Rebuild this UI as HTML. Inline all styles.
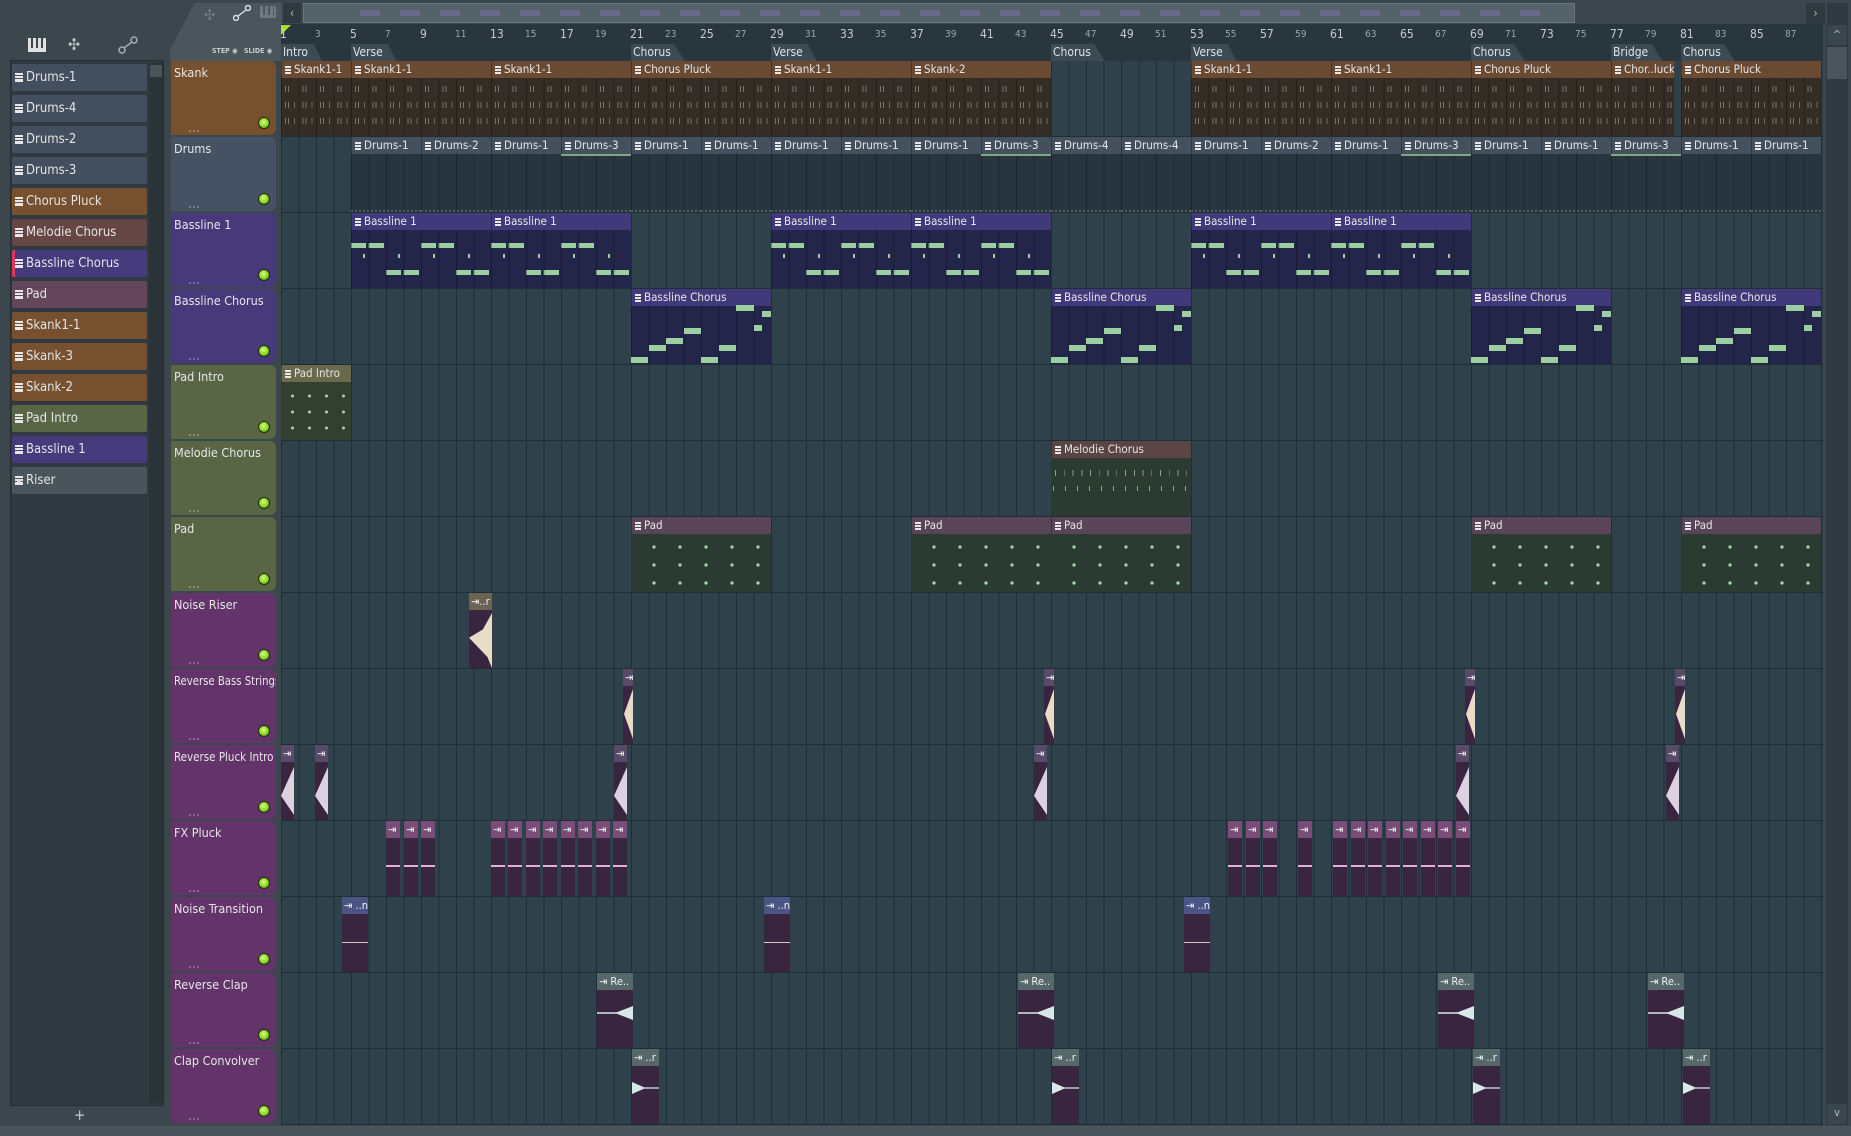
<!DOCTYPE html>
<html><head><meta charset="utf-8"><style>
*{margin:0;padding:0;box-sizing:border-box}
body{width:1851px;height:1136px;background:#3c464d;position:relative;overflow:hidden;font-family:"Liberation Sans Narrow","DejaVu Sans Condensed","Liberation Sans",sans-serif;color:#d8dde0}
.abs{position:absolute}
#lp{left:10px;top:60px;width:154px;height:1046px;background:#2f393f;border:1px solid #252d33}
#lps{left:149px;top:63px;width:14px;height:1040px;background:#2a3338}
#lps i{position:absolute;left:1px;top:2px;width:12px;height:12px;background:#4a545b}
.li{position:absolute;left:12px;width:135px;height:27px;font-size:13px;line-height:27px;padding-left:14px;color:#e4e4e4;border-radius:2px;white-space:nowrap}
.li:before{content:"";position:absolute;left:3px;top:9px;width:8px;height:9px;background:linear-gradient(#e8e8e8 0 2px,transparent 2px 3px,#e8e8e8 3px 5px,transparent 5px 6px,#e8e8e8 6px 9px)}
.dr{background:#434e5e}.br{background:#76502f}.rd{background:#654645}.pu{background:#453a7c}.mv{background:#64465a}.ol{background:#5a6546}.gy{background:#4a545b}
#tp{left:170px;top:3px;width:112px;height:58px;background:#4a555c;clip-path:polygon(22% 0,100% 0,100% 100%,0 100%,0 80%);border-radius:8px 0 0 0}
.hd{position:absolute;left:171px;width:105px;height:74px;border-radius:0 6px 6px 0;font-size:12.5px;padding:4px 0 0 3px;color:#e6e6e6;white-space:nowrap;overflow:hidden}
.hd span{display:inline-block;transform-origin:0 0}
.hd b{position:absolute;right:6px;bottom:6px;width:12px;height:12px;border-radius:50%;background:radial-gradient(circle at 45% 40%,#d8ff7a,#7fce1e 60%,#3c6a10);border:1px solid #1d2a10}
.hd u{position:absolute;left:18px;bottom:3px;width:10px;height:2px;border-top:2px dotted rgba(255,255,255,.25)}
#grid{left:281px;top:61px;width:1542px;height:1064px;background:#2f424b;background-image:repeating-linear-gradient(90deg,#1f2d35 0 1px,transparent 1px 17.5px),repeating-linear-gradient(180deg,transparent 0 75px,#1f2d35 75px 76px)}
.n{position:absolute;top:29px;left:calc(280px + (var(--s) - 1)*17.5px);font-size:10px;color:#9aa6ad}
.n.b{font-size:12px;color:#c5ccd1;top:27px}
#ruler{left:281px;top:24px;width:1542px;height:37px;background:#2a363d}
.mk{position:absolute;top:44px;left:calc(281px + (var(--s) - 1)*17.5px);height:17px;padding:0 14px 0 2px;font-size:12px;line-height:17px;color:#e0e4e6;background:#3b4a53;clip-path:polygon(0 0,80% 0,100% 100%,0 100%)}
.c{position:absolute;left:calc(281px + (var(--s) - 1)*17.5px);width:calc((var(--e) - var(--s))*17.5px);height:75px;overflow:hidden}
.t{height:17px;font-size:11.5px;line-height:17px;padding-left:12px;white-space:nowrap;overflow:hidden;position:relative;color:#e6e6e6;border-left:1px solid rgba(0,0,0,.3)}
.t:before{content:"";position:absolute;left:3px;top:5px;width:6px;height:8px;background:linear-gradient(#e8e8e8 0 2px,transparent 2px 3px,#e8e8e8 3px 5px,transparent 5px 6px,#e8e8e8 6px 8px)}
.bd{height:58px;position:relative;background-image:repeating-linear-gradient(90deg,rgba(0,0,0,.3) 0 1px,transparent 1px 17.5px)}
.sk .t{background:#6b4a33}.sk .bd{background-color:#362c26;background-image:repeating-linear-gradient(90deg,rgba(0,0,0,.3) 0 1px,transparent 1px 17.5px),repeating-linear-gradient(90deg,transparent 0 4px,rgba(160,190,150,.55) 4px 5px,transparent 5px 7px,rgba(160,190,150,.55) 7px 8px,transparent 8px 17.5px);background-size:auto,100% 6px;background-repeat:repeat,repeat-x;background-position:0 0,0 8px}
.sk .bd:before,.sk .bd:after{content:"";position:absolute;left:0;right:0;height:6px;background:repeating-linear-gradient(90deg,transparent 0 4px,rgba(160,190,150,.55) 4px 5px,transparent 5px 7px,rgba(160,190,150,.55) 7px 8px,transparent 8px 13px,rgba(160,190,150,.45) 13px 14px,transparent 14px 17.5px)}
.sk .bd:before{top:24px}.sk .bd:after{top:40px}
.dm .t{background:#45505f}.dm .bd{background-color:#28353f;border-bottom:2px dotted rgba(160,200,160,.3)}
.dm.g .bd{border-top:2px solid #7fa880}
.bl .t{background:#42397a}.bl .bd{background-color:#23254a;background-image:repeating-linear-gradient(90deg,rgba(0,0,0,.3) 0 1px,transparent 1px 17.5px),linear-gradient(90deg,#9ccfa0 0 15px,transparent 15px 17.5px,#9ccfa0 17.5px 33px,transparent 33px),linear-gradient(90deg,transparent 0 35px,#9ccfa0 35px 50px,transparent 50px 52.5px,#9ccfa0 52.5px 68px,transparent 68px),linear-gradient(90deg,transparent 0 12px,#9ccfa0 12px 14px,transparent 14px);background-size:auto,70px 5px,70px 5px,35px 4px;background-repeat:repeat,repeat-x,repeat-x,repeat-x;background-position:0 0,0 13px,0 40px,0 24px}
.bc .t{background:#42397a}.bc .bd{background-color:#23254a}
.bc i{position:absolute;background:#9ccfa0;height:6px}
.pi .t{background:#6a694c}.pi .bd{background-color:#33402f;background-image:radial-gradient(circle,#a8d0a0 1.3px,transparent 1.8px);background-size:17px 16px;background-position:3px 6px}
.mc .t{background:#5a4444}.mc .bd{background-color:#2c3b31;background-image:repeating-linear-gradient(90deg,transparent 0 4px,#88a888 4px 5px,transparent 5px 8.75px),repeating-linear-gradient(90deg,transparent 0 2px,#88a888 2px 3px,transparent 3px 12px);background-size:100% 6px,100% 5px;background-repeat:repeat-x,repeat-x;background-position:0 12px,0 28px}
.pd .t{background:#5a4458}.pd .bd{background-color:#2c3b31;background-image:radial-gradient(circle,#a8d8a8 1.4px,transparent 1.9px);background-size:26px 18px;background-position:10px 4px}
.a{position:absolute;height:75px;overflow:hidden;background:#3a2540}
.a .h{height:17px;font-size:11px;line-height:17px;color:#f0f0f0;padding-left:2px;white-space:nowrap;overflow:hidden}
.a .w{position:absolute;left:0;right:0;background:#e8dcc8}
.fx .h{background:#7a4c78}.rp .h{background:#5a4a6a}.rb .h{background:#5a4a6a}.nr .h{background:#6b6455}.nt .h{background:#4a5585}.rc .h,.cc .h{background:#56686a}
#vs{left:1826px;top:24px;width:22px;height:1101px;background:#2f3a40}
</style></head><body>
<div class="abs" style="left:28px;top:38px;width:18px;height:14px;background:linear-gradient(90deg,#e0e0e0 0 3px,transparent 3px 5px,#e0e0e0 5px 8px,transparent 8px 10px,#e0e0e0 10px 13px,transparent 13px 15px,#e0e0e0 15px 18px);border-bottom:4px solid #e0e0e0"></div>
<div class="abs" style="left:68px;top:38px;width:22px;height:14px;color:#bcc3c8;font-size:16px;line-height:14px">✣</div>
<svg class="abs" style="left:118px;top:36px" width="20" height="18"><circle cx="4" cy="14" r="3" fill="none" stroke="#aab" stroke-width="1.5"/><circle cx="16" cy="4" r="3" fill="none" stroke="#aab" stroke-width="1.5"/><line x1="6" y1="12" x2="14" y2="6" stroke="#aab" stroke-width="1.5"/></svg>
<div id="lp" class="abs"></div>
<div id="lps" class="abs"><i></i></div>
<div class="li dr" style="top:64px">Drums-1</div>
<div class="li dr" style="top:95px">Drums-4</div>
<div class="li dr" style="top:126px">Drums-2</div>
<div class="li dr" style="top:157px">Drums-3</div>
<div class="li br" style="top:188px">Chorus Pluck</div>
<div class="li rd" style="top:219px">Melodie Chorus</div>
<div class="li pu" style="top:250px;box-shadow:inset 3px 0 0 #e0365a">Bassline Chorus</div>
<div class="li mv" style="top:281px">Pad</div>
<div class="li br" style="top:312px">Skank1-1</div>
<div class="li br" style="top:343px">Skank-3</div>
<div class="li br" style="top:374px">Skank-2</div>
<div class="li ol" style="top:405px">Pad Intro</div>
<div class="li pu" style="top:436px">Bassline 1</div>
<div class="li gy" style="top:467px;padding-left:14px">Riser</div>
<div class="abs" style="left:17px;top:479px;width:4px;height:4px;border-radius:50%;background:#ddd"></div>
<div class="abs" style="left:74px;top:1106px;font-size:15px;color:#ccd">+</div>
<div id="tp" class="abs"></div>
<div class="abs" style="left:204px;top:6px;font-size:15px;color:#6e7a82">✣</div>
<svg class="abs" style="left:233px;top:5px" width="18" height="16"><circle cx="3" cy="13" r="2.5" fill="none" stroke="#dde" stroke-width="1.4"/><circle cx="15" cy="3" r="2.5" fill="none" stroke="#dde" stroke-width="1.4"/><line x1="5" y1="11" x2="13" y2="5" stroke="#dde" stroke-width="1.4"/></svg>
<div class="abs" style="left:260px;top:6px;width:16px;height:12px;background:linear-gradient(90deg,#6e7a82 0 3px,transparent 3px 5px,#6e7a82 5px 8px,transparent 8px 10px,#6e7a82 10px 13px,transparent 13px 14px,#6e7a82 14px 16px);border-bottom:3px solid #6e7a82"></div>
<div class="abs" style="left:212px;top:47px;font-size:7px;color:#c8ced2;font-weight:bold">STEP ◉ &nbsp; SLIDE ◉</div>
<div class="abs" style="left:283px;top:3px;width:18px;height:20px;background:#2f3a40;color:#bbb;font-size:12px;text-align:center;line-height:20px">‹</div>
<div class="abs" style="left:303px;top:3px;width:1272px;height:20px;background:#56626a;border:1px solid #6a767e"></div>
<div class="abs" style="left:340px;top:10px;width:1200px;height:6px;background:repeating-linear-gradient(90deg,transparent 0 20px,rgba(140,120,200,.35) 20px 40px)"></div>
<div class="abs" style="left:1806px;top:3px;width:19px;height:21px;background:#2f3a40;color:#bbb;font-size:12px;text-align:center;line-height:21px">›</div>
<div class="abs" style="left:1827px;top:3px;width:21px;height:21px;background:#2f3a40"></div>
<div id="ruler" class="abs"></div>
<div class="abs" style="left:281px;top:25px;width:0;height:0;border-left:10px solid #a6e22a;border-bottom:10px solid transparent"></div>
<span class="n b" style="--s:1">1</span><span class="n" style="--s:3">3</span><span class="n b" style="--s:5">5</span><span class="n" style="--s:7">7</span><span class="n b" style="--s:9">9</span><span class="n" style="--s:11">11</span><span class="n b" style="--s:13">13</span><span class="n" style="--s:15">15</span><span class="n b" style="--s:17">17</span><span class="n" style="--s:19">19</span><span class="n b" style="--s:21">21</span><span class="n" style="--s:23">23</span><span class="n b" style="--s:25">25</span><span class="n" style="--s:27">27</span><span class="n b" style="--s:29">29</span><span class="n" style="--s:31">31</span><span class="n b" style="--s:33">33</span><span class="n" style="--s:35">35</span><span class="n b" style="--s:37">37</span><span class="n" style="--s:39">39</span><span class="n b" style="--s:41">41</span><span class="n" style="--s:43">43</span><span class="n b" style="--s:45">45</span><span class="n" style="--s:47">47</span><span class="n b" style="--s:49">49</span><span class="n" style="--s:51">51</span><span class="n b" style="--s:53">53</span><span class="n" style="--s:55">55</span><span class="n b" style="--s:57">57</span><span class="n" style="--s:59">59</span><span class="n b" style="--s:61">61</span><span class="n" style="--s:63">63</span><span class="n b" style="--s:65">65</span><span class="n" style="--s:67">67</span><span class="n b" style="--s:69">69</span><span class="n" style="--s:71">71</span><span class="n b" style="--s:73">73</span><span class="n" style="--s:75">75</span><span class="n b" style="--s:77">77</span><span class="n" style="--s:79">79</span><span class="n b" style="--s:81">81</span><span class="n" style="--s:83">83</span><span class="n b" style="--s:85">85</span><span class="n" style="--s:87">87</span>
<div class="mk" style="--s:1">Intro</div><div class="mk" style="--s:5">Verse</div><div class="mk" style="--s:21">Chorus</div><div class="mk" style="--s:29">Verse</div><div class="mk" style="--s:45">Chorus</div><div class="mk" style="--s:53">Verse</div><div class="mk" style="--s:69">Chorus</div><div class="mk" style="--s:77">Bridge</div><div class="mk" style="--s:81">Chorus</div>
<div id="vs" class="abs"></div>
<div class="abs" style="left:1827px;top:25px;width:20px;height:20px;background:#3a464d;color:#bbb;font-size:11px;text-align:center;line-height:20px">^</div>
<div class="abs" style="left:1827px;top:47px;width:20px;height:32px;background:#4a555c"></div>
<div class="abs" style="left:1827px;top:1104px;width:20px;height:20px;background:#3a464d;color:#bbb;font-size:11px;text-align:center;line-height:18px">v</div>
<div class="abs" style="left:0;top:1126px;width:1851px;height:10px;background:#4a545b"></div>
<div id="grid" class="abs"></div>
<div class="hd" style="top:61px;background:#76502f">Skank<b></b><u></u></div>
<div class="hd" style="top:137px;background:#465264">Drums<b></b><u></u></div>
<div class="hd" style="top:213px;background:#463a7a">Bassline 1<b></b><u></u></div>
<div class="hd" style="top:289px;background:#463a7a">Bassline Chorus<b></b><u></u></div>
<div class="hd" style="top:365px;background:#5a6546">Pad Intro<b></b><u></u></div>
<div class="hd" style="top:441px;background:#5a6546">Melodie Chorus<b></b><u></u></div>
<div class="hd" style="top:517px;background:#5a6546">Pad<b></b><u></u></div>
<div class="hd" style="top:593px;background:#62346a">Noise Riser<b></b><u></u></div>
<div class="hd" style="top:669px;background:#62346a"><span style="transform:scaleX(.9)">Reverse Bass Strings</span><b></b><u></u></div>
<div class="hd" style="top:745px;background:#62346a"><span style="transform:scaleX(.92)">Reverse Pluck Intro</span><b></b><u></u></div>
<div class="hd" style="top:821px;background:#62346a">FX Pluck<b></b><u></u></div>
<div class="hd" style="top:897px;background:#62346a">Noise Transition<b></b><u></u></div>
<div class="hd" style="top:973px;background:#62346a">Reverse Clap<b></b><u></u></div>
<div class="hd" style="top:1049px;background:#62346a">Clap Convolver<b></b><u></u></div>
<div class="c sk" style="--s:1;--e:5;top:61px"><div class="t">Skank1-1</div><div class="bd"></div></div>
<div class="c sk" style="--s:5;--e:13;top:61px"><div class="t">Skank1-1</div><div class="bd"></div></div>
<div class="c sk" style="--s:13;--e:21;top:61px"><div class="t">Skank1-1</div><div class="bd"></div></div>
<div class="c sk" style="--s:21;--e:29;top:61px"><div class="t">Chorus Pluck</div><div class="bd"></div></div>
<div class="c sk" style="--s:29;--e:37;top:61px"><div class="t">Skank1-1</div><div class="bd"></div></div>
<div class="c sk" style="--s:37;--e:45;top:61px"><div class="t">Skank-2</div><div class="bd"></div></div>
<div class="c sk" style="--s:53;--e:61;top:61px"><div class="t">Skank1-1</div><div class="bd"></div></div>
<div class="c sk" style="--s:61;--e:69;top:61px"><div class="t">Skank1-1</div><div class="bd"></div></div>
<div class="c sk" style="--s:69;--e:77;top:61px"><div class="t">Chorus Pluck</div><div class="bd"></div></div>
<div class="c sk" style="--s:77;--e:80.6;top:61px"><div class="t">Chor..luck</div><div class="bd"></div></div>
<div class="c sk" style="--s:81;--e:89;top:61px"><div class="t">Chorus Pluck</div><div class="bd"></div></div>
<div class="c dm" style="--s:5;--e:9;top:137px"><div class="t">Drums-1</div><div class="bd"></div></div>
<div class="c dm" style="--s:9;--e:13;top:137px"><div class="t">Drums-2</div><div class="bd"></div></div>
<div class="c dm" style="--s:13;--e:17;top:137px"><div class="t">Drums-1</div><div class="bd"></div></div>
<div class="c dm g" style="--s:17;--e:21;top:137px"><div class="t">Drums-3</div><div class="bd"></div></div>
<div class="c dm" style="--s:21;--e:25;top:137px"><div class="t">Drums-1</div><div class="bd"></div></div>
<div class="c dm" style="--s:25;--e:29;top:137px"><div class="t">Drums-1</div><div class="bd"></div></div>
<div class="c dm" style="--s:29;--e:33;top:137px"><div class="t">Drums-1</div><div class="bd"></div></div>
<div class="c dm" style="--s:33;--e:37;top:137px"><div class="t">Drums-1</div><div class="bd"></div></div>
<div class="c dm" style="--s:37;--e:41;top:137px"><div class="t">Drums-1</div><div class="bd"></div></div>
<div class="c dm g" style="--s:41;--e:45;top:137px"><div class="t">Drums-3</div><div class="bd"></div></div>
<div class="c dm" style="--s:45;--e:49;top:137px"><div class="t">Drums-4</div><div class="bd"></div></div>
<div class="c dm" style="--s:49;--e:53;top:137px"><div class="t">Drums-4</div><div class="bd"></div></div>
<div class="c dm" style="--s:53;--e:57;top:137px"><div class="t">Drums-1</div><div class="bd"></div></div>
<div class="c dm" style="--s:57;--e:61;top:137px"><div class="t">Drums-2</div><div class="bd"></div></div>
<div class="c dm" style="--s:61;--e:65;top:137px"><div class="t">Drums-1</div><div class="bd"></div></div>
<div class="c dm g" style="--s:65;--e:69;top:137px"><div class="t">Drums-3</div><div class="bd"></div></div>
<div class="c dm" style="--s:69;--e:73;top:137px"><div class="t">Drums-1</div><div class="bd"></div></div>
<div class="c dm" style="--s:73;--e:77;top:137px"><div class="t">Drums-1</div><div class="bd"></div></div>
<div class="c dm g" style="--s:77;--e:81;top:137px"><div class="t">Drums-3</div><div class="bd"></div></div>
<div class="c dm" style="--s:81;--e:85;top:137px"><div class="t">Drums-1</div><div class="bd"></div></div>
<div class="c dm" style="--s:85;--e:89;top:137px"><div class="t">Drums-1</div><div class="bd"></div></div>
<div class="c bl" style="--s:5;--e:13;top:213px"><div class="t">Bassline 1</div><div class="bd"></div></div>
<div class="c bl" style="--s:13;--e:21;top:213px"><div class="t">Bassline 1</div><div class="bd"></div></div>
<div class="c bl" style="--s:29;--e:37;top:213px"><div class="t">Bassline 1</div><div class="bd"></div></div>
<div class="c bl" style="--s:37;--e:45;top:213px"><div class="t">Bassline 1</div><div class="bd"></div></div>
<div class="c bl" style="--s:53;--e:61;top:213px"><div class="t">Bassline 1</div><div class="bd"></div></div>
<div class="c bl" style="--s:61;--e:69;top:213px"><div class="t">Bassline 1</div><div class="bd"></div></div>
<div class="c bc" style="--s:21;--e:29;top:289px"><div class="t">Bassline Chorus</div><div class="bd"><i style="left:0;width:17px;top:51px"></i><i style="left:18px;width:17px;top:39px"></i><i style="left:35px;width:17px;top:32px"></i><i style="left:53px;width:17px;top:22px"></i><i style="left:70px;width:17px;top:51px"></i><i style="left:88px;width:17px;top:39px"></i><i style="left:105px;width:18px;top:-1px"></i><i style="left:123px;width:8px;top:19px"></i><i style="left:131px;width:9px;top:5px"></i></div></div>
<div class="c bc" style="--s:45;--e:53;top:289px"><div class="t">Bassline Chorus</div><div class="bd"><i style="left:0;width:17px;top:51px"></i><i style="left:18px;width:17px;top:39px"></i><i style="left:35px;width:17px;top:32px"></i><i style="left:53px;width:17px;top:22px"></i><i style="left:70px;width:17px;top:51px"></i><i style="left:88px;width:17px;top:39px"></i><i style="left:105px;width:18px;top:-1px"></i><i style="left:123px;width:8px;top:19px"></i><i style="left:131px;width:9px;top:5px"></i></div></div>
<div class="c bc" style="--s:69;--e:77;top:289px"><div class="t">Bassline Chorus</div><div class="bd"><i style="left:0;width:17px;top:51px"></i><i style="left:18px;width:17px;top:39px"></i><i style="left:35px;width:17px;top:32px"></i><i style="left:53px;width:17px;top:22px"></i><i style="left:70px;width:17px;top:51px"></i><i style="left:88px;width:17px;top:39px"></i><i style="left:105px;width:18px;top:-1px"></i><i style="left:123px;width:8px;top:19px"></i><i style="left:131px;width:9px;top:5px"></i></div></div>
<div class="c bc" style="--s:81;--e:89;top:289px"><div class="t">Bassline Chorus</div><div class="bd"><i style="left:0;width:17px;top:51px"></i><i style="left:18px;width:17px;top:39px"></i><i style="left:35px;width:17px;top:32px"></i><i style="left:53px;width:17px;top:22px"></i><i style="left:70px;width:17px;top:51px"></i><i style="left:88px;width:17px;top:39px"></i><i style="left:105px;width:18px;top:-1px"></i><i style="left:123px;width:8px;top:19px"></i><i style="left:131px;width:9px;top:5px"></i></div></div>
<div class="c pi" style="--s:1;--e:5;top:365px"><div class="t">Pad Intro</div><div class="bd"></div></div>
<div class="c mc" style="--s:45;--e:53;top:441px"><div class="t">Melodie Chorus</div><div class="bd"></div></div>
<div class="c pd" style="--s:21;--e:29;top:517px"><div class="t">Pad</div><div class="bd"></div></div>
<div class="c pd" style="--s:37;--e:45;top:517px"><div class="t">Pad</div><div class="bd"></div></div>
<div class="c pd" style="--s:45;--e:53;top:517px"><div class="t">Pad</div><div class="bd"></div></div>
<div class="c pd" style="--s:69;--e:77;top:517px"><div class="t">Pad</div><div class="bd"></div></div>
<div class="c pd" style="--s:81;--e:89;top:517px"><div class="t">Pad</div><div class="bd"></div></div>
<div class="a nr" style="left:469px;width:23px;top:593px"><div class="h">⇥..r</div><div class="w" style="top:20px;height:55px;clip-path:polygon(100% 0,100% 100%,80% 80%,0 45%,60% 30%)"></div></div>
<div class="a rb" style="left:623px;width:10px;top:669px"><div class="h">⇥</div><div class="w" style="top:20px;height:50px;clip-path:polygon(100% 0,100% 100%,10% 50%)"></div></div>
<div class="a rb" style="left:1044px;width:10px;top:669px"><div class="h">⇥</div><div class="w" style="top:20px;height:50px;clip-path:polygon(100% 0,100% 100%,10% 50%)"></div></div>
<div class="a rb" style="left:1465px;width:10px;top:669px"><div class="h">⇥</div><div class="w" style="top:20px;height:50px;clip-path:polygon(100% 0,100% 100%,10% 50%)"></div></div>
<div class="a rb" style="left:1675px;width:10px;top:669px"><div class="h">⇥</div><div class="w" style="top:20px;height:50px;clip-path:polygon(100% 0,100% 100%,10% 50%)"></div></div>
<div class="a rp" style="left:281px;width:13px;top:745px"><div class="h">⇥</div><div class="w" style="top:22px;height:48px;background:#ddd0e0;clip-path:polygon(100% 0,100% 100%,0 60%)"></div></div>
<div class="a rp" style="left:315px;width:13px;top:745px"><div class="h">⇥</div><div class="w" style="top:22px;height:48px;background:#ddd0e0;clip-path:polygon(100% 0,100% 100%,0 60%)"></div></div>
<div class="a rp" style="left:614px;width:13px;top:745px"><div class="h">⇥</div><div class="w" style="top:22px;height:48px;background:#ddd0e0;clip-path:polygon(100% 0,100% 100%,0 60%)"></div></div>
<div class="a rp" style="left:1034px;width:13px;top:745px"><div class="h">⇥</div><div class="w" style="top:22px;height:48px;background:#ddd0e0;clip-path:polygon(100% 0,100% 100%,0 60%)"></div></div>
<div class="a rp" style="left:1456px;width:13px;top:745px"><div class="h">⇥</div><div class="w" style="top:22px;height:48px;background:#ddd0e0;clip-path:polygon(100% 0,100% 100%,0 60%)"></div></div>
<div class="a rp" style="left:1666px;width:13px;top:745px"><div class="h">⇥</div><div class="w" style="top:22px;height:48px;background:#ddd0e0;clip-path:polygon(100% 0,100% 100%,0 60%)"></div></div>
<div class="a fx" style="left:386px;width:14px;top:821px"><div class="h">⇥</div><div class="w" style="top:44px;height:2px;background:#e0b0d8"></div></div>
<div class="a fx" style="left:404px;width:14px;top:821px"><div class="h">⇥</div><div class="w" style="top:44px;height:2px;background:#e0b0d8"></div></div>
<div class="a fx" style="left:421px;width:14px;top:821px"><div class="h">⇥</div><div class="w" style="top:44px;height:2px;background:#e0b0d8"></div></div>
<div class="a fx" style="left:491px;width:14px;top:821px"><div class="h">⇥</div><div class="w" style="top:44px;height:2px;background:#e0b0d8"></div></div>
<div class="a fx" style="left:508px;width:14px;top:821px"><div class="h">⇥</div><div class="w" style="top:44px;height:2px;background:#e0b0d8"></div></div>
<div class="a fx" style="left:526px;width:14px;top:821px"><div class="h">⇥</div><div class="w" style="top:44px;height:2px;background:#e0b0d8"></div></div>
<div class="a fx" style="left:543px;width:14px;top:821px"><div class="h">⇥</div><div class="w" style="top:44px;height:2px;background:#e0b0d8"></div></div>
<div class="a fx" style="left:561px;width:14px;top:821px"><div class="h">⇥</div><div class="w" style="top:44px;height:2px;background:#e0b0d8"></div></div>
<div class="a fx" style="left:578px;width:14px;top:821px"><div class="h">⇥</div><div class="w" style="top:44px;height:2px;background:#e0b0d8"></div></div>
<div class="a fx" style="left:596px;width:14px;top:821px"><div class="h">⇥</div><div class="w" style="top:44px;height:2px;background:#e0b0d8"></div></div>
<div class="a fx" style="left:613px;width:14px;top:821px"><div class="h">⇥</div><div class="w" style="top:44px;height:2px;background:#e0b0d8"></div></div>
<div class="a fx" style="left:1228px;width:14px;top:821px"><div class="h">⇥</div><div class="w" style="top:44px;height:2px;background:#e0b0d8"></div></div>
<div class="a fx" style="left:1246px;width:14px;top:821px"><div class="h">⇥</div><div class="w" style="top:44px;height:2px;background:#e0b0d8"></div></div>
<div class="a fx" style="left:1263px;width:14px;top:821px"><div class="h">⇥</div><div class="w" style="top:44px;height:2px;background:#e0b0d8"></div></div>
<div class="a fx" style="left:1298px;width:14px;top:821px"><div class="h">⇥</div><div class="w" style="top:44px;height:2px;background:#e0b0d8"></div></div>
<div class="a fx" style="left:1333px;width:14px;top:821px"><div class="h">⇥</div><div class="w" style="top:44px;height:2px;background:#e0b0d8"></div></div>
<div class="a fx" style="left:1351px;width:14px;top:821px"><div class="h">⇥</div><div class="w" style="top:44px;height:2px;background:#e0b0d8"></div></div>
<div class="a fx" style="left:1368px;width:14px;top:821px"><div class="h">⇥</div><div class="w" style="top:44px;height:2px;background:#e0b0d8"></div></div>
<div class="a fx" style="left:1386px;width:14px;top:821px"><div class="h">⇥</div><div class="w" style="top:44px;height:2px;background:#e0b0d8"></div></div>
<div class="a fx" style="left:1403px;width:14px;top:821px"><div class="h">⇥</div><div class="w" style="top:44px;height:2px;background:#e0b0d8"></div></div>
<div class="a fx" style="left:1421px;width:14px;top:821px"><div class="h">⇥</div><div class="w" style="top:44px;height:2px;background:#e0b0d8"></div></div>
<div class="a fx" style="left:1438px;width:14px;top:821px"><div class="h">⇥</div><div class="w" style="top:44px;height:2px;background:#e0b0d8"></div></div>
<div class="a fx" style="left:1456px;width:14px;top:821px"><div class="h">⇥</div><div class="w" style="top:44px;height:2px;background:#e0b0d8"></div></div>
<div class="a nt" style="left:342px;width:26px;top:897px"><div class="h">⇥ ..n</div><div class="w" style="top:45px;height:1px;background:#ccc"></div></div>
<div class="a nt" style="left:764px;width:26px;top:897px"><div class="h">⇥ ..n</div><div class="w" style="top:45px;height:1px;background:#ccc"></div></div>
<div class="a nt" style="left:1184px;width:26px;top:897px"><div class="h">⇥ ..n</div><div class="w" style="top:45px;height:1px;background:#ccc"></div></div>
<div class="a rc" style="left:597px;width:36px;top:973px"><div class="h">⇥ Re..</div><div class="w" style="top:33px;height:14px;background:#d8e8e8;clip-path:polygon(0 45%,55% 45%,100% 0,100% 100%,55% 55%,0 55%)"></div></div>
<div class="a rc" style="left:1018px;width:36px;top:973px"><div class="h">⇥ Re..</div><div class="w" style="top:33px;height:14px;background:#d8e8e8;clip-path:polygon(0 45%,55% 45%,100% 0,100% 100%,55% 55%,0 55%)"></div></div>
<div class="a rc" style="left:1438px;width:36px;top:973px"><div class="h">⇥ Re..</div><div class="w" style="top:33px;height:14px;background:#d8e8e8;clip-path:polygon(0 45%,55% 45%,100% 0,100% 100%,55% 55%,0 55%)"></div></div>
<div class="a rc" style="left:1648px;width:36px;top:973px"><div class="h">⇥ Re..</div><div class="w" style="top:33px;height:14px;background:#d8e8e8;clip-path:polygon(0 45%,55% 45%,100% 0,100% 100%,55% 55%,0 55%)"></div></div>
<div class="a cc" style="left:632px;width:27px;top:1049px"><div class="h">⇥ ..r</div><div class="w" style="top:33px;height:12px;background:#d8e8e8;clip-path:polygon(0 0,45% 45%,100% 45%,100% 55%,45% 55%,0 100%)"></div></div>
<div class="a cc" style="left:1052px;width:27px;top:1049px"><div class="h">⇥ ..r</div><div class="w" style="top:33px;height:12px;background:#d8e8e8;clip-path:polygon(0 0,45% 45%,100% 45%,100% 55%,45% 55%,0 100%)"></div></div>
<div class="a cc" style="left:1473px;width:27px;top:1049px"><div class="h">⇥ ..r</div><div class="w" style="top:33px;height:12px;background:#d8e8e8;clip-path:polygon(0 0,45% 45%,100% 45%,100% 55%,45% 55%,0 100%)"></div></div>
<div class="a cc" style="left:1683px;width:27px;top:1049px"><div class="h">⇥ ..r</div><div class="w" style="top:33px;height:12px;background:#d8e8e8;clip-path:polygon(0 0,45% 45%,100% 45%,100% 55%,45% 55%,0 100%)"></div></div>
</body></html>
